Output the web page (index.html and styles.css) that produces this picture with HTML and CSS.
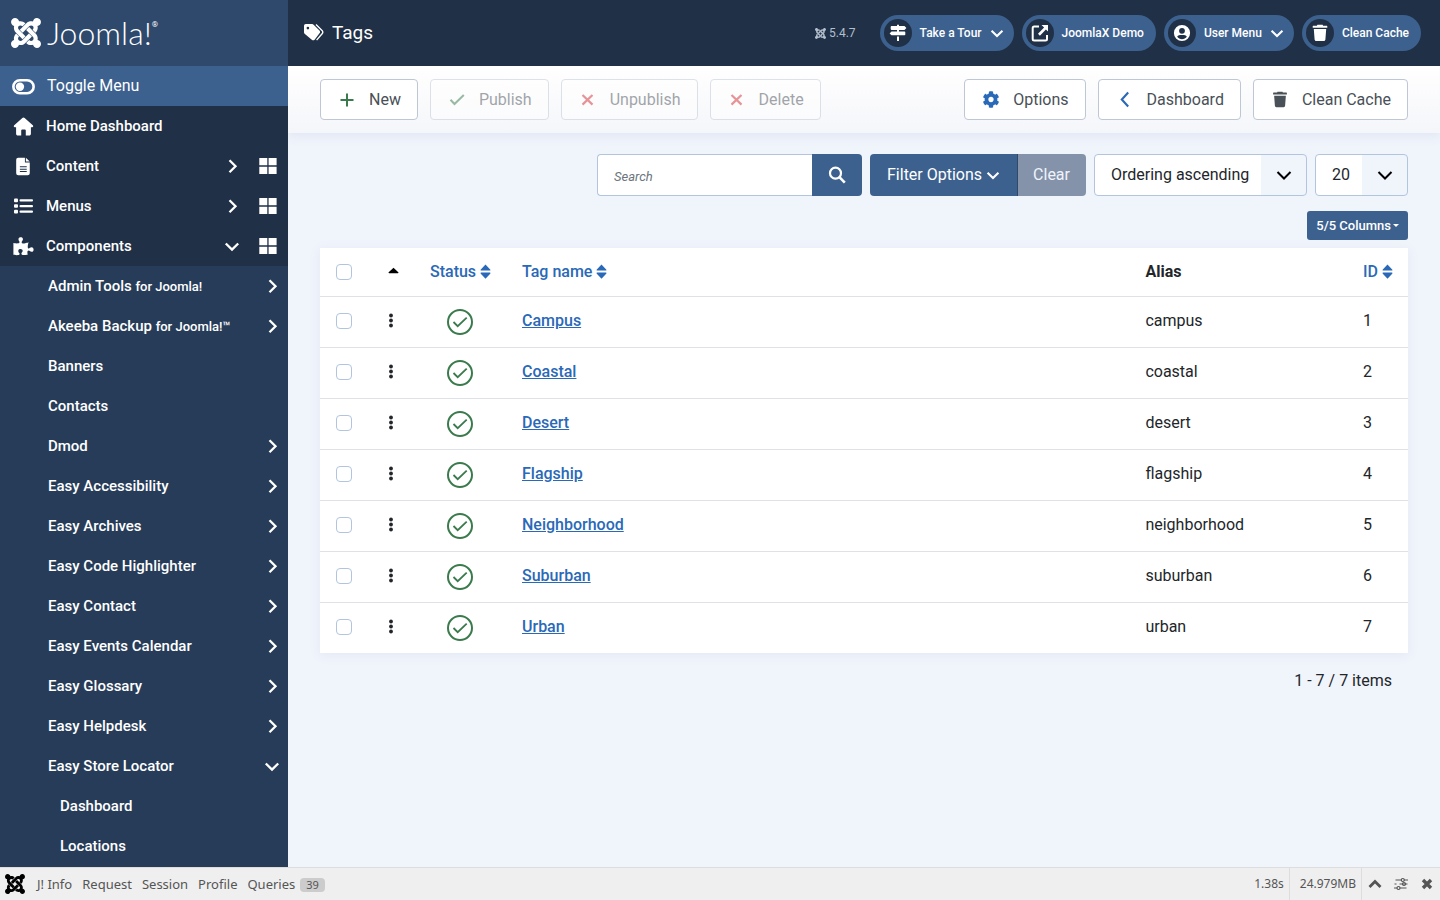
FILE: index.html
```html
<!DOCTYPE html>
<html lang="en">
<head>
    <meta charset="UTF-8">
    <meta name="viewport" content="width=device-width, initial-scale=1.0">
    <title>Tags - Administration</title>
    <link rel="stylesheet" href="styles.css">
</head>
<body>
    <!-- icon symbols -->
    <svg class="sprite" aria-hidden="true">
        <symbol id="i-joomla" viewBox="0 32 448 448"><path d="M.6 92.1C.6 58.8 27.4 32 60.4 32c30 0 54.5 21.9 59.2 50.2 32.6-7.6 67.1.6 96.5 30l-44.3 44.3c-20.5-20.5-42.6-16.3-55.4-3.5-14.3 14.3-14.3 37.9 0 52.2l99.5 99.5-44 44.3c-87.7-87.2-49.7-49.7-99.8-99.7-26.8-26.5-35-64.8-24.8-98.9C20.4 144.6.6 120.7.6 92.1zm129.5 116.4l44.3 44.3c10-10 89.7-89.7 99.7-99.8 14.3-14.3 37.6-14.3 51.9 0 12.8 12.8 17 35-3.5 55.4l44 44.3c31.2-31.2 38.5-67.6 28.9-101.2 29.2-4.1 51.9-29.2 51.9-59.5 0-33.2-26.8-60.1-59.8-60.1-30.3 0-55.4 22.5-59.5 51.6-33.8-9.9-71.7-1.5-98.3 25.1-18.3 19.1-71.1 71.5-99.6 99.9zm266.3 152.2c8.2-32.7-.9-68.5-26.3-93.9-11.8-12.2 5 4.7-99.5-99.7l-44.3 44.3 99.7 99.7c14.3 14.3 14.3 37.6 0 51.9-12.8 12.8-35 17-55.4-3.5l-44 44.3c27.6 30.2 68 38.8 102.7 28 5.5 27.4 29.7 48.1 58.9 48.1 33 0 59.8-26.8 59.8-60.1 0-30.2-22.5-55-51.6-59.1zm-84.3-53.1l-44-44.3c-87 86.4-50.4 50.4-99.7 99.8-14.3 14.3-37.6 14.3-51.9 0-13.1-13.4-16.9-35.3 3.2-55.4l-44-44.3c-30.2 30.2-38 65.2-29.5 98.3-26.7 6-46.2 29.9-46.2 58.2C0 453.2 26.8 480 59.8 480c28.6 0 52.5-19.8 58.6-46.7 32.7 8.2 68.5-.6 94.2-26 32.1-32 12.2-12.4 99.5-99.7z"/></symbol>
        <symbol id="i-toggle" viewBox="0 0 22 16"><rect x="1.3" y="2" width="19.4" height="12.4" rx="6.2" fill="none" stroke="currentColor" stroke-width="2.5"/><circle cx="7.6" cy="8.2" r="4"/></symbol>
        <symbol id="i-home" viewBox="0 0 22 20"><path d="M11 .6c.5 0 .9.2 1.2.5l8.6 7.6c.9.8.4 2.1-.7 2.1h-1.3v6.7c0 1.1-.8 1.9-1.9 1.9h-3.5v-5.2c0-.7-.4-1.1-1.1-1.1H9.7c-.7 0-1.1.4-1.1 1.1v5.2H5.1c-1.1 0-1.9-.8-1.9-1.9v-6.7H1.9c-1.1 0-1.6-1.3-.7-2.1l8.6-7.6c.3-.3.7-.5 1.2-.5z"/></symbol>
        <symbol id="i-file" viewBox="0 0 16 20"><path fill-rule="evenodd" d="M2.500.7h7v5.100h5.100v11.300a2.200 2.200 0 0 1-2.200 2.200h-9.900a2.200 2.200 0 0 1-2.200-2.200v-14.200a2.200 2.200 0 0 1 2.200-2.200zM4.200 9.800v1h7.200v-1zm0 2.500v1h7.200v-1zm0 2.500v1h7.200v-1zM10.500.7l4.100 4.100h-4.100z"/></symbol>
        <symbol id="i-list" viewBox="0 0 20 16"><rect x=".5" y=".6" width="4" height="3.6" rx="1"/><rect x=".5" y="6.2" width="4" height="3.6" rx="1"/><rect x=".5" y="11.8" width="4" height="3.6" rx="1"/><rect x="6" y="1.2" width="13.5" height="2.3" rx="1"/><rect x="6" y="6.9" width="13.5" height="2.3" rx="1"/><rect x="6" y="12.5" width="13.5" height="2.3" rx="1"/></symbol>
        <symbol id="i-puzzle" viewBox="-40 0 656 530"><path d="M519.442 288.651c-41.519 0-59.5 31.593-82.058 31.593C377.409 320.244 432 144 432 144s-196.288 80-196.288-3.297c0-35.827 36.288-46.25 36.288-85.985C272 19.216 243.885 0 210.539 0c-34.654 0-66.366 18.891-66.366 56.346 0 41.364 31.711 59.277 31.711 81.75C175.885 207.719 0 166.758 0 166.758v333.237s178.635 41.047 178.635-28.662c0-22.473-40-40.107-40-81.471 0-37.456 29.25-56.346 63.577-56.346 33.673 0 61.788 19.216 61.788 54.717 0 39.735-36.288 50.158-36.288 85.985 0 60.803 129.675 25.73 181.23 25.73 0 0-34.725-120.101 25.827-120.101 35.962 0 46.423 36.152 86.308 36.152C556.712 416 576 387.99 576 354.443c0-34.199-18.962-65.792-56.558-65.792z"/></symbol>
        <symbol id="i-grid" viewBox="0 0 18 16"><path d="M.3 0h8v7.300h-8zM9.600 0h8v7.300h-8zM.3 8.700h8v7.300h-8zM9.600 8.700h8v7.300h-8z"/></symbol>
        <symbol id="i-right" viewBox="0 0 16 16"><path d="M5.500 2.200l6 6-6 6" fill="none" stroke="currentColor" stroke-width="2.300"/></symbol>
        <symbol id="i-left" viewBox="0 0 16 16"><path d="M11 1.500L5 8l6 6.500" fill="none" stroke="currentColor" stroke-width="2"/></symbol>
        <symbol id="i-down" viewBox="0 0 16 16"><path d="M1.800 5.500l6.200 6 6.200-6" fill="none" stroke="currentColor" stroke-width="2.400"/></symbol>
        <symbol id="i-tags" viewBox="0 0 20 18"><path fill-rule="evenodd" d="M0 1.800A1.700 1.700 0 0 1 1.700.1h6.400c.6 0 1.100.2 1.500.6l5.900 5.700c.8.8.8 2 0 2.800l-4.900 6.500c-.8.8-2 .8-2.800 0L.6 9.700C.2 9.300 0 8.800 0 8.200zM3.900 2.800a1.300 1.300 0 1 0 0 2.600 1.300 1.300 0 0 0 0-2.600z"/><path d="M12 .6l6 5.800c1 1.100 1 2.300.1 3.400l-5.500 6.300" fill="none" stroke="currentColor" stroke-width="1.400"/></symbol>
        <symbol id="i-signs" viewBox="0 0 18 18"><path d="M8 .8h2v1.300h5.500l1.900 1.900-1.900 1.900h-13c-.5 0-.8-.3-.8-.8V2.900c0-.5.3-.8.8-.8H8zM8 5.900h2v1.600h5.500c.5 0 .8.300.8.800v2.200c0 .5-.3.800-.8.800h-13L.600 9.400l1.900-1.900H8zM8 12.500h2V17H8z"/></symbol>
        <symbol id="i-external" viewBox="0 0 18 18"><path d="M8 2.500H3.200c-.9 0-1.500.6-1.500 1.500v11c0 .9.600 1.500 1.500 1.500h11.300c.9 0 1.500-.6 1.500-1.500v-4" fill="none" stroke="currentColor" stroke-width="2"/><path d="M10.500.9H17v6.700l-2.100-2.100-6 6.200-1.900-2 6.100-6.200z"/></symbol>
        <symbol id="i-user" viewBox="0 0 18 18"><path fill-rule="evenodd" d="M9 .9a8.100 8.100 0 1 1 0 16.200A8.100 8.100 0 0 1 9 .9zm0 3a2.900 2.900 0 1 0 0 5.800 2.900 2.900 0 0 0 0-5.800zM4.200 12.800c1.100 1.500 2.800 2.400 4.800 2.400s3.700-.9 4.800-2.400c-.5-1.200-1.500-1.900-2.800-1.900H7c-1.300 0-2.300.7-2.800 1.900z"/></symbol>
        <symbol id="i-trash" viewBox="0 0 18 18"><path d="M1.700 2.200c0-.3.200-.5.500-.5h3.700l.5-.9h5.200l.5.900h3.700c.3 0 .5.200.5.500v1.500H1.700zM2.800 5h12.400l-.8 10.600c-.1.900-.7 1.500-1.600 1.500H5.200c-.9 0-1.500-.6-1.600-1.500z"/></symbol>
        <symbol id="i-plus" viewBox="0 0 20 20"><path d="M10 3.500v13M3.500 10h13" fill="none" stroke="currentColor" stroke-width="2"/></symbol>
        <symbol id="i-check" viewBox="0 0 20 20"><path d="M3.500 9.800l4 4.200L16.800 5" fill="none" stroke="currentColor" stroke-width="2"/></symbol>
        <symbol id="i-times" viewBox="0 0 20 20"><path d="M4.500 5l10 9.600M14.500 5l-10 9.600" fill="none" stroke="currentColor" stroke-width="2.200"/></symbol>
        <symbol id="i-cog" viewBox="0 0 512 512"><path d="M487.4 315.7l-42.6-24.6c4.3-23.2 4.3-47 0-70.2l42.6-24.6c4.9-2.8 7.1-8.6 5.5-14-11.1-35.6-30-67.8-54.7-94.6-3.8-4.1-10-5.1-14.8-2.3L380.8 110c-17.9-15.4-38.5-27.3-60.8-35.1V25.8c0-5.6-3.9-10.5-9.4-11.7-36.7-8.2-74.3-7.8-109.2 0-5.5 1.2-9.4 6.1-9.4 11.7V75c-22.2 7.9-42.8 19.8-60.8 35.1L88.7 85.5c-4.9-2.8-11-1.9-14.8 2.3-24.7 26.7-43.6 58.9-54.7 94.6-1.7 5.4.6 11.2 5.5 14L67.3 221c-4.3 23.2-4.3 47 0 70.2l-42.6 24.6c-4.9 2.8-7.1 8.6-5.5 14 11.1 35.6 30 67.8 54.7 94.6 3.8 4.1 10 5.1 14.8 2.3l42.6-24.6c17.9 15.4 38.5 27.3 60.8 35.1v49.2c0 5.6 3.9 10.5 9.4 11.7 36.7 8.2 74.3 7.8 109.2 0 5.5-1.2 9.4-6.1 9.4-11.7v-49.2c22.2-7.9 42.8-19.8 60.8-35.1l42.6 24.6c4.9 2.8 11 1.9 14.8-2.3 24.7-26.7 43.6-58.9 54.7-94.6 1.5-5.5-.7-11.3-5.6-14.1zM256 336c-44.1 0-80-35.9-80-80s35.9-80 80-80 80 35.9 80 80-35.9 80-80 80z"/></symbol>
        <symbol id="i-search" viewBox="0 0 18 18"><circle cx="7.5" cy="7.2" r="5.5" fill="none" stroke="currentColor" stroke-width="2.200"/><path d="M11.400 11.200l5.400 5.400" fill="none" stroke="currentColor" stroke-width="2.600"/></symbol>
        <symbol id="i-sort" viewBox="0 0 10 16"><path d="M5 .4l4.700 5c.5.500.2 1.200-.5 1.200H.8C.1 6.600-.2 5.900.3 5.400zM5 14.800l4.700-5c.5-.5.2-1.200-.5-1.200H.8c-.7 0-1 .7-.5 1.200z"/></symbol>
        <symbol id="i-sort-up" viewBox="0 0 10 16"><path d="M5 3.800l4.800 4.500c.4.400.1.900-.4.900H.6c-.5 0-.8-.5-.4-.9z"/></symbol>
        <symbol id="i-dots" viewBox="0 0 6 16"><circle cx="3" cy="2.500" r="1.900"/><circle cx="3" cy="7.500" r="1.900"/><circle cx="3" cy="12.500" r="1.900"/></symbol>
        <symbol id="i-published" viewBox="0 0 28 28"><circle cx="14" cy="14" r="12" fill="none" stroke="currentColor" stroke-width="2"/><path d="M7.500 14l4.200 4.200 9-8.600" fill="none" stroke="currentColor" stroke-width="1.800"/></symbol>
        <symbol id="i-up" viewBox="0 0 16 16"><path d="M2.500 11L8 5.500l5.500 5.500" fill="none" stroke="currentColor" stroke-width="2.800"/></symbol>
        <symbol id="i-sliders" viewBox="0 0 16 16"><path d="M2.500 4h6M11 4h4M1.500 8h2M6.500 8h8M1 12h3M7 12h6.500" stroke="currentColor" stroke-width="1.200"/><g fill="none" stroke="currentColor" stroke-width="1.200"><circle cx="9.800" cy="4" r="1.500"/><circle cx="11" cy="8" r="1.500"/><circle cx="5.500" cy="12" r="1.500"/></g></symbol>
        <symbol id="i-close" viewBox="0 0 16 16"><path d="M4 4l8 8M12 4l-8 8" fill="none" stroke="currentColor" stroke-width="3.400"/></symbol>
    </svg>

    <div class="wrapper">
        <!-- sidebar -->
        <nav class="sidebar" aria-label="Main menu">
            <a href="#" class="logo">
                <svg class="logo-mark"><use href="#i-joomla"/></svg>
                <span class="logo-text">Joomla!</span>
                <span class="logo-reg">®</span>
            </a>
            <button type="button" class="toggle">
                <svg class="icon-menu"><use href="#i-toggle"/></svg>Toggle Menu
            </button>
            <ul class="menu">
                <li><a href="#"><svg class="icon-menu"><use href="#i-home"/></svg><span>Home Dashboard</span></a></li>
                <li><a href="#"><svg class="icon-menu"><use href="#i-file"/></svg><span>Content</span><svg class="icon"><use href="#i-right"/></svg></a><a href="#" class="dash" aria-label="Content Dashboard"><svg class="icon-grid"><use href="#i-grid"/></svg></a></li>
                <li><a href="#"><svg class="icon-menu icon-menu-sm"><use href="#i-list"/></svg><span>Menus</span><svg class="icon"><use href="#i-right"/></svg></a><a href="#" class="dash" aria-label="Menus Dashboard"><svg class="icon-grid"><use href="#i-grid"/></svg></a></li>
                <li><a href="#"><svg class="icon-menu"><use href="#i-puzzle"/></svg><span>Components</span><svg class="icon"><use href="#i-down"/></svg></a><a href="#" class="dash" aria-label="Components Dashboard"><svg class="icon-grid"><use href="#i-grid"/></svg></a></li>
            </ul>
            <ul class="submenu">
                <li><a href="#"><span>Admin Tools <small>for Joomla!</small></span><svg class="icon"><use href="#i-right"/></svg></a></li>
                <li><a href="#"><span>Akeeba Backup <small>for Joomla!™</small></span><svg class="icon"><use href="#i-right"/></svg></a></li>
                <li><a href="#"><span>Banners</span></a></li>
                <li><a href="#"><span>Contacts</span></a></li>
                <li><a href="#"><span>Dmod</span><svg class="icon"><use href="#i-right"/></svg></a></li>
                <li><a href="#"><span>Easy Accessibility</span><svg class="icon"><use href="#i-right"/></svg></a></li>
                <li><a href="#"><span>Easy Archives</span><svg class="icon"><use href="#i-right"/></svg></a></li>
                <li><a href="#"><span>Easy Code Highlighter</span><svg class="icon"><use href="#i-right"/></svg></a></li>
                <li><a href="#"><span>Easy Contact</span><svg class="icon"><use href="#i-right"/></svg></a></li>
                <li><a href="#"><span>Easy Events Calendar</span><svg class="icon"><use href="#i-right"/></svg></a></li>
                <li><a href="#"><span>Easy Glossary</span><svg class="icon"><use href="#i-right"/></svg></a></li>
                <li><a href="#"><span>Easy Helpdesk</span><svg class="icon"><use href="#i-right"/></svg></a></li>
                <li><a href="#"><span>Easy Store Locator</span><svg class="icon"><use href="#i-down"/></svg></a></li>
                <li><a href="#" class="level-3"><span>Dashboard</span></a></li>
                <li><a href="#" class="level-3"><span>Locations</span></a></li>
            </ul>
        </nav>

        <div class="page">
            <header class="header">
                <h1><svg class="icon-title"><use href="#i-tags"/></svg>Tags</h1>
                <div class="header-items">
                    <span class="version"><svg><use href="#i-joomla"/></svg>5.4.7</span>
                    <button type="button" class="pill"><span class="pill-icon"><svg><use href="#i-signs"/></svg></span>Take a Tour<svg class="pill-arrow"><use href="#i-down"/></svg></button>
                    <a href="#" class="pill"><span class="pill-icon"><svg><use href="#i-external"/></svg></span>JoomlaX Demo</a>
                    <button type="button" class="pill"><span class="pill-icon"><svg><use href="#i-user"/></svg></span>User Menu<svg class="pill-arrow"><use href="#i-down"/></svg></button>
                    <a href="#" class="pill"><span class="pill-icon"><svg><use href="#i-trash"/></svg></span>Clean Cache</a>
                </div>
            </header>

            <div class="toolbar">
                <button type="button" class="btn"><svg class="green"><use href="#i-plus"/></svg>New</button>
                <button type="button" class="btn" disabled><svg class="green"><use href="#i-check"/></svg>Publish</button>
                <button type="button" class="btn" disabled><svg class="red"><use href="#i-times"/></svg>Unpublish</button>
                <button type="button" class="btn" disabled><svg class="red"><use href="#i-times"/></svg>Delete</button>
                <button type="button" class="btn btn-first-right"><svg class="blue small"><use href="#i-cog"/></svg>Options</button>
                <a href="#" class="btn"><svg class="blue small"><use href="#i-left"/></svg>Dashboard</a>
                <a href="#" class="btn"><svg class="small"><use href="#i-trash"/></svg>Clean Cache</a>
            </div>

            <main class="content">
                <form class="filters">
                    <div class="group">
                        <input type="text" class="search" placeholder="Search" aria-label="Search">
                        <button type="button" class="btn-blue btn-search" aria-label="Search"><svg><use href="#i-search"/></svg></button>
                    </div>
                    <div class="group">
                        <button type="button" class="btn-blue btn-filter">Filter Options<svg><use href="#i-down"/></svg></button>
                        <button type="button" class="btn-blue btn-clear" disabled>Clear</button>
                    </div>
                    <select class="select" aria-label="Sort Table By:">
                        <option>Ordering ascending</option>
                    </select>
                    <select class="select select-limit" aria-label="Number of items">
                        <option>20</option>
                    </select>
                </form>

                <div class="columns">
                    <button type="button" class="btn-blue btn-columns">5/5 Columns</button>
                </div>

                <table class="table">
                    <thead>
                        <tr>
                            <th class="c-check"><input type="checkbox" aria-label="Check All Items"></th>
                            <th class="c-order"><a href="#" aria-label="Ordering"><svg class="sort black"><use href="#i-sort-up"/></svg></a></th>
                            <th class="c-status"><a href="#">Status<svg class="sort"><use href="#i-sort"/></svg></a></th>
                            <th><a href="#">Tag name<svg class="sort"><use href="#i-sort"/></svg></a></th>
                            <th class="c-alias">Alias</th>
                            <th class="c-id"><a href="#">ID<svg class="sort"><use href="#i-sort"/></svg></a></th>
                        </tr>
                    </thead>
                    <tbody>
                        <tr>
                            <td class="c-check"><input type="checkbox" aria-label="Select Campus"></td>
                            <td class="c-order"><svg class="dots"><use href="#i-dots"/></svg></td>
                            <td class="c-status"><a href="#" aria-label="Published"><svg class="state"><use href="#i-published"/></svg></a></td>
                            <td><a href="#" class="name">Campus</a></td>
                            <td>campus</td>
                            <td>1</td>
                        </tr>
                        <tr>
                            <td class="c-check"><input type="checkbox" aria-label="Select Coastal"></td>
                            <td class="c-order"><svg class="dots"><use href="#i-dots"/></svg></td>
                            <td class="c-status"><a href="#" aria-label="Published"><svg class="state"><use href="#i-published"/></svg></a></td>
                            <td><a href="#" class="name">Coastal</a></td>
                            <td>coastal</td>
                            <td>2</td>
                        </tr>
                        <tr>
                            <td class="c-check"><input type="checkbox" aria-label="Select Desert"></td>
                            <td class="c-order"><svg class="dots"><use href="#i-dots"/></svg></td>
                            <td class="c-status"><a href="#" aria-label="Published"><svg class="state"><use href="#i-published"/></svg></a></td>
                            <td><a href="#" class="name">Desert</a></td>
                            <td>desert</td>
                            <td>3</td>
                        </tr>
                        <tr>
                            <td class="c-check"><input type="checkbox" aria-label="Select Flagship"></td>
                            <td class="c-order"><svg class="dots"><use href="#i-dots"/></svg></td>
                            <td class="c-status"><a href="#" aria-label="Published"><svg class="state"><use href="#i-published"/></svg></a></td>
                            <td><a href="#" class="name">Flagship</a></td>
                            <td>flagship</td>
                            <td>4</td>
                        </tr>
                        <tr>
                            <td class="c-check"><input type="checkbox" aria-label="Select Neighborhood"></td>
                            <td class="c-order"><svg class="dots"><use href="#i-dots"/></svg></td>
                            <td class="c-status"><a href="#" aria-label="Published"><svg class="state"><use href="#i-published"/></svg></a></td>
                            <td><a href="#" class="name">Neighborhood</a></td>
                            <td>neighborhood</td>
                            <td>5</td>
                        </tr>
                        <tr>
                            <td class="c-check"><input type="checkbox" aria-label="Select Suburban"></td>
                            <td class="c-order"><svg class="dots"><use href="#i-dots"/></svg></td>
                            <td class="c-status"><a href="#" aria-label="Published"><svg class="state"><use href="#i-published"/></svg></a></td>
                            <td><a href="#" class="name">Suburban</a></td>
                            <td>suburban</td>
                            <td>6</td>
                        </tr>
                        <tr>
                            <td class="c-check"><input type="checkbox" aria-label="Select Urban"></td>
                            <td class="c-order"><svg class="dots"><use href="#i-dots"/></svg></td>
                            <td class="c-status"><a href="#" aria-label="Published"><svg class="state"><use href="#i-published"/></svg></a></td>
                            <td><a href="#" class="name">Urban</a></td>
                            <td>urban</td>
                            <td>7</td>
                        </tr>
                    </tbody>
                </table>
                <div class="total">1 - 7 / 7 items</div>
            </main>
        </div>
    </div>

    <!-- debug bar -->
    <footer class="debugbar">
        <svg class="debug-logo"><use href="#i-joomla"/></svg>
        <a href="#">J! Info</a>
        <a href="#">Request</a>
        <a href="#">Session</a>
        <a href="#">Profile</a>
        <a href="#">Queries<span class="badge">39</span></a>
        <div class="debug-right">
            <span>1.38s</span>
            <span>24.979MB</span>
            <div class="debug-actions">
                <button type="button" aria-label="Open"><svg><use href="#i-up"/></svg></button>
                <button type="button" aria-label="Settings"><svg><use href="#i-sliders"/></svg></button>
                <button type="button" aria-label="Close"><svg><use href="#i-close"/></svg></button>
            </div>
        </div>
    </footer>
</body>
</html>
```
FILE: styles.css
```css
*{
    box-sizing: border-box;
}

body{
    margin: 0;
    min-height: 100vh;
    display: flex;
    flex-direction: column;
    background-color: #f0f4fb;
    color: #22262a;
    font-family: Roboto, "Liberation Sans", sans-serif;
    font-size: 16px;
    line-height: 24px;
}

a{
    color: inherit;
    text-decoration: none;
}

button, input, select{
    font: inherit;
}

button{
    border: 0;
    cursor: pointer;
}

svg{
    fill: currentColor;
    flex: none;
}

ul{
    list-style: none;
    margin: 0;
    padding: 0;
}

.sprite{
    display: none;
}

.wrapper{
    flex: 1;
    display: flex;
}

/* sidebar */
.sidebar{
    width: 288px;
    flex: none;
    background-color: #263c59;
    color: #fff;
}

.logo{
    height: 66px;
    padding-left: 11px;
    display: flex;
    align-items: center;
    background-color: #2e496b;
}

.logo-mark{
    width: 30px;
    height: 30px;
    margin-right: 6px;
}

.logo-text{
    font-family: Lato, sans-serif;
    font-size: 32px;
    font-weight: 300;
    line-height: 32px;
}

.logo-reg{
    font-size: 8px;
    line-height: 8px;
    padding-bottom: 16px;
}

.toggle{
    width: 100%;
    height: 40px;
    padding: 0 12px;
    display: flex;
    align-items: center;
    gap: 12px;
    background-color: #3d618f;
    color: #fff;
}

.icon-menu{
    width: 23px;
    height: 19px;
}

.icon-menu-sm{
    height: 16px;
}

.menu{
    background-color: #1f3047;
}

.menu li{
    display: flex;
    padding-left: 12px;
}

.menu a, .submenu a{
    flex: 1;
    height: 40px;
    display: flex;
    align-items: center;
    font-size: 15px;
    font-weight: 500;
}

.menu a{
    gap: 11px;
}

.menu span, .submenu span{
    flex: 1;
}

.menu .dash{
    flex: none;
    width: 48px;
    padding-left: 19px;
}

.icon{
    width: 16px;
    height: 16px;
}

.icon-grid{
    width: 18px;
    height: 16px;
}

.submenu a{
    padding: 0 8px 0 48px;
}

.submenu .level-3{
    padding-left: 60px;
}

.submenu small{
    font-size: 13px;
}

/* header */
.page{
    flex: 1;
    min-width: 0;
    overflow: hidden;
}

.header{
    position: relative;
    z-index: 1;
    height: 66px;
    padding: 0 19px 0 16px;
    display: flex;
    align-items: center;
    justify-content: space-between;
    background-color: #1f3047;
    color: #fff;
}

.header h1{
    margin: 0;
    display: flex;
    align-items: center;
    gap: 8px;
    font-size: 19px;
    font-weight: 400;
}

.icon-title{
    width: 20px;
    height: 18px;
}

.header-items{
    display: flex;
    align-items: center;
    gap: 8px;
    font-size: 12px;
}

.version{
    display: flex;
    align-items: center;
    gap: 3px;
    margin-right: 16px;
    color: #b4bfce;
}

.version svg{
    width: 11px;
    height: 11px;
}

.pill{
    height: 36px;
    padding: 0 12px 0 4px;
    display: flex;
    align-items: center;
    gap: 8px;
    border-radius: 18px;
    background-color: #3d618f;
    color: #fff;
    font-size: 12px;
    font-weight: 500;
}

.pill-icon{
    width: 28px;
    height: 28px;
    display: flex;
    align-items: center;
    justify-content: center;
    border-radius: 50%;
    background-color: #1f3047;
}

.pill-icon svg{
    width: 18px;
    height: 18px;
}

.pill-arrow{
    width: 14px;
    height: 14px;
}

button.pill{
    padding-right: 10px;
}

/* toolbar */
.toolbar{
    padding: 13px 32px;
    display: flex;
    gap: 12px;
    background-image: linear-gradient(#fff, #f5f6fa);
    box-shadow: 0 3px 10px #dfe6f3;
}

.btn{
    height: 41px;
    padding: 0 16px;
    display: flex;
    align-items: center;
    gap: 12px;
    border: 1px solid #bec7d6;
    border-radius: 4px;
    background-color: #fff;
    color: #495057;
}

.btn:disabled{
    opacity: .5;
}

.btn svg{
    width: 20px;
    height: 20px;
}

.btn .small{
    height: 17px;
}

.btn-first-right{
    margin-left: auto;
}

.green{
    color: #3a7a4c;
}

.red{
    color: #d32f35;
}

.blue{
    color: #2a69b8;
}

/* filters */
.content{
    padding: 21px 32px;
}

.filters{
    display: flex;
    justify-content: flex-end;
    gap: 8px;
}

.group{
    display: flex;
}

.search{
    width: 215px;
    height: 42px;
    padding: 0 16px;
    border: 1px solid #b2c4de;
    border-right: 0;
    border-radius: 4px 0 0 4px;
    background-color: #fff;
}

.search::placeholder{
    color: #6c757d;
    font-size: 13px;
    font-style: italic;
}

.btn-blue{
    display: flex;
    align-items: center;
    justify-content: center;
    border-radius: 4px;
    background-color: #3d618f;
    color: #fff;
}

.btn-search{
    width: 50px;
    border-radius: 0 4px 4px 0;
}

.btn-search svg{
    width: 18px;
    height: 18px;
}

.btn-filter{
    padding: 0 17px;
    gap: 4px;
    border-radius: 4px 0 0 4px;
}

.btn-filter svg{
    width: 14px;
    height: 14px;
}

.btn-clear{
    padding: 0 16px 0 15px;
    border-left: 1px solid #2e496b;
    border-radius: 0 4px 4px 0;
    background-color: #8493aa;
    color: #f0f4fb;
}

.select{
    width: 213px;
    height: 42px;
    padding: 0 46px 0 16px;
    appearance: none;
    border: 1px solid #b2c4de;
    border-radius: 4px;
    background-color: #fff;
    background-image: url("data:image/svg+xml,%3Csvg xmlns='http://www.w3.org/2000/svg' width='16' height='16'%3E%3Cpath d='M1.5 5l6.500 6.500L14.500 5' fill='none' stroke='%23000' stroke-width='2'/%3E%3C/svg%3E"), linear-gradient(#f0f4fb, #f0f4fb);
    background-position: right 14px center, right;
    background-size: 16px 16px, 45px 100%;
    background-repeat: no-repeat;
    color: #22262a;
}

.select-limit{
    width: 93px;
}

.columns{
    display: flex;
    justify-content: flex-end;
    margin: 15px 0 8px;
}

.btn-columns{
    height: 29px;
    padding: 0 9px;
    gap: 2px;
    border-radius: 3px;
    font-size: 13px;
    font-weight: 500;
}

.btn-columns::after{
    content: "";
    border: 3px solid transparent;
    border-top-color: #fff;
    border-bottom: 0;
}

/* table */
.table{
    width: 100%;
    table-layout: fixed;
    border-collapse: collapse;
    background-color: #fff;
    box-shadow: 0 2px 10px #e2e9f5;
}

.table th, .table td{
    padding: 12px 16px;
    border-bottom: 1px solid #dee2e6;
    text-align: left;
    font-weight: 400;
}

.table th{
    height: 48px;
    padding: 11px 16px;
    font-weight: 700;
}

.table th a{
    display: flex;
    align-items: center;
    gap: 4px;
    color: #2a69b8;
    font-weight: 500;
}

.table td{
    height: 51px;
    padding: 11px 16px 13px;
}

.table tbody tr:last-child td{
    border-bottom: 0;
}

.table .c-check{
    width: 48px;
}

.table .c-order{
    width: 46px;
    padding-left: 20px;
    padding-right: 14px;
}

.table .c-status{
    width: 92px;
    text-align: center;
}

.table td.c-status{
    padding: 0;
}

.table .c-alias{
    width: 20%;
}

.table .c-id{
    width: 61px;
}

.table input{
    display: block;
    width: 16px;
    height: 16px;
    margin: 0;
    appearance: none;
    border: 1px solid #b2c4de;
    border-radius: 4px;
    background-color: #fff;
}

.sort{
    width: 11px;
    height: 16px;
}

.table .black{
    color: #000;
}

.dots{
    display: block;
    width: 6px;
    height: 16px;
}

.state{
    display: block;
    width: 28px;
    height: 28px;
    margin: 0 auto;
    color: #3a7a4c;
}

.name{
    color: #2a69b8;
    font-weight: 500;
    text-decoration: underline;
}

.total{
    padding: 16px;
    text-align: right;
}

/* debug bar */
.debugbar{
    height: 33px;
    padding-left: 5px;
    display: flex;
    align-items: center;
    gap: 10px;
    border-top: 1px solid #ddd;
    background-color: #efefef;
    color: #555;
    font-family: "Noto Sans", sans-serif;
    font-size: 13px;
}

.debug-logo{
    width: 20px;
    height: 20px;
    margin-right: 2px;
    color: #000;
}

.badge{
    display: inline-block;
    margin-left: 5px;
    padding: 0 6px;
    border-radius: 4px;
    background-color: #ccc;
    font-size: 11px;
    line-height: 14px;
}

.debug-right{
    margin-left: auto;
    display: flex;
    line-height: 32px;
    font-size: 12px;
}

.debug-right span{
    padding: 0 5px 0 10px;
    border-right: 1px solid #ddd;
}

.debug-actions{
    display: flex;
    align-items: center;
    gap: 10px;
    padding: 0 5px;
}

.debug-actions button{
    padding: 0;
    background: none;
    color: #555;
    display: flex;
}

.debug-actions svg{
    width: 16px;
    height: 16px;
}
```
